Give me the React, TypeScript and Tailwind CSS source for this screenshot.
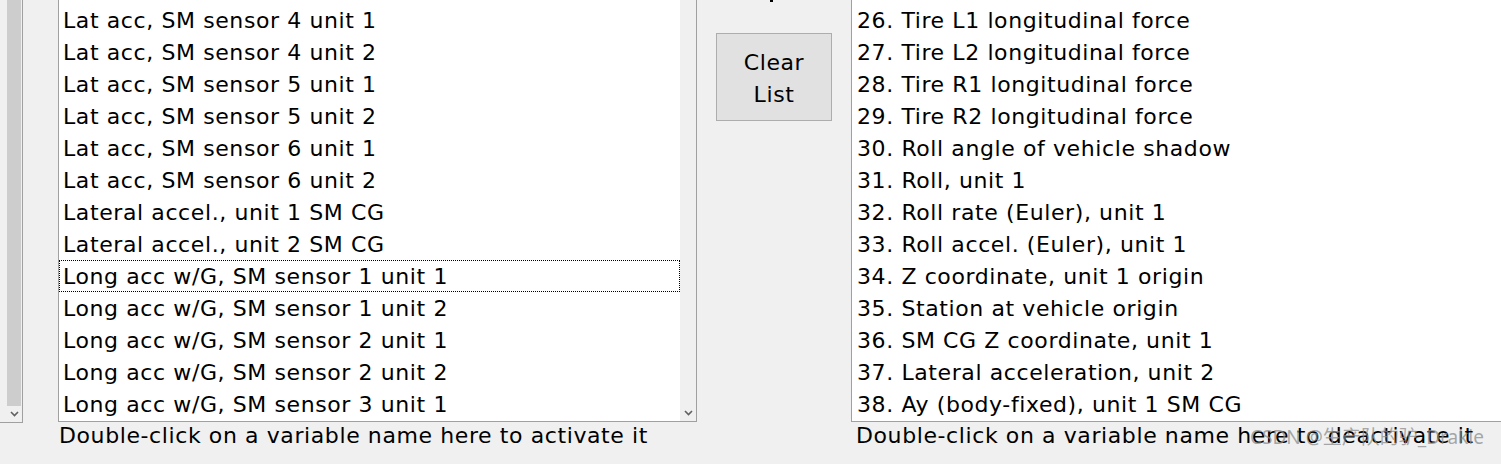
import React from "react";

const leftItems = [
  "Lat acc, SM sensor 4 unit 1",
  "Lat acc, SM sensor 4 unit 2",
  "Lat acc, SM sensor 5 unit 1",
  "Lat acc, SM sensor 5 unit 2",
  "Lat acc, SM sensor 6 unit 1",
  "Lat acc, SM sensor 6 unit 2",
  "Lateral accel., unit 1 SM CG",
  "Lateral accel., unit 2 SM CG",
  "Long acc w/G, SM sensor 1 unit 1",
  "Long acc w/G, SM sensor 1 unit 2",
  "Long acc w/G, SM sensor 2 unit 1",
  "Long acc w/G, SM sensor 2 unit 2",
  "Long acc w/G, SM sensor 3 unit 1",
];

const rightItems = [
  "26. Tire L1 longitudinal force",
  "27. Tire L2 longitudinal force",
  "28. Tire R1 longitudinal force",
  "29. Tire R2 longitudinal force",
  "30. Roll angle of vehicle shadow",
  "31. Roll, unit 1",
  "32. Roll rate (Euler), unit 1",
  "33. Roll accel. (Euler), unit 1",
  "34. Z coordinate, unit 1 origin",
  "35. Station at vehicle origin",
  "36. SM CG Z coordinate, unit 1",
  "37. Lateral acceleration, unit 2",
  "38. Ay (body-fixed), unit 1 SM CG",
];

const FOCUSED = 8;

function Chevron() {
  return (
    <svg width="9" height="6" viewBox="0 0 9 6" className="block">
      <path d="M1 1 L4.5 4.5 L8 1" stroke="#606060" strokeWidth="1.6" fill="none" />
    </svg>
  );
}

export default function App() {
  return (
    <div
      className="relative flex h-[464px] w-[1501px] overflow-hidden bg-[#f0f0f0] text-[22px] tracking-[0.6px] text-black"
      style={{ fontFamily: '"DejaVu Sans", Verdana, sans-serif' }}
    >
      {/* scrollbar of the list further left */}
      <div className="flex h-[423px] w-[23px] shrink-0 flex-col border-r border-b border-[#a0a0a0] pl-[7px] pr-[1px]">
        <div className="flex-1 bg-[#cdcdcd]" />
        <div className="flex h-[16px] items-center justify-center">
          <Chevron />
        </div>
      </div>

      {/* available variables */}
      <div className="ml-[35px] flex w-[639px] shrink-0 flex-col">
        <div className="flex h-[422px] border-x border-b border-[#a0a0a0] bg-white">
          <div className="flex-1 pt-[4px]">
            {leftItems.map((t, i) => (
              <div
                key={t}
                className={
                  i === FOCUSED
                    ? "h-[32px] border border-dotted border-black pl-[3px] leading-[32px] whitespace-nowrap"
                    : "h-[32px] border border-transparent pl-[3px] leading-[32px] whitespace-nowrap"
                }
              >
                {t}
              </div>
            ))}
          </div>
          <div className="flex w-[16px] flex-col justify-end bg-[#f0f0f0] pb-[5px]">
            <div className="flex justify-center">
              <Chevron />
            </div>
          </div>
        </div>
        <div className="pl-[1px] leading-[28px] whitespace-nowrap">
          Double-click on a variable name here to activate it
        </div>
      </div>

      {/* middle buttons */}
      <div className="flex w-[154px] shrink-0 flex-col">
        <div className="ml-[73px] h-[2px] w-[3px] bg-black" />
        <div className="ml-[19px] mt-[31px] flex h-[88px] w-[116px] flex-col items-center justify-center border border-[#adadad] bg-[#e1e1e1] pt-[3px] leading-[32px]">
          <span>Clear</span>
          <span>List</span>
        </div>
      </div>

      {/* active variables */}
      <div className="flex flex-1 flex-col">
        <div className="h-[422px] border-l border-b border-[#a0a0a0] bg-white pt-[5px]">
          {rightItems.map((t) => (
            <div key={t} className="h-[32px] pl-[5px] leading-[32px] whitespace-nowrap">
              {t}
            </div>
          ))}
        </div>
        <div className="pl-[5px] leading-[28px] whitespace-nowrap">
          Double-click on a variable name here to deactivate it
        </div>
      </div>

      <div
        className="absolute left-[1250px] top-[423px] text-[19px] leading-[28px] tracking-normal whitespace-nowrap text-[rgba(140,140,140,0.75)]"
        style={{ fontFamily: '"Noto Sans", "Noto Sans CJK SC", sans-serif' }}
      >
        CSDN @生产队的驴_Drakie
      </div>
    </div>
  );
}
